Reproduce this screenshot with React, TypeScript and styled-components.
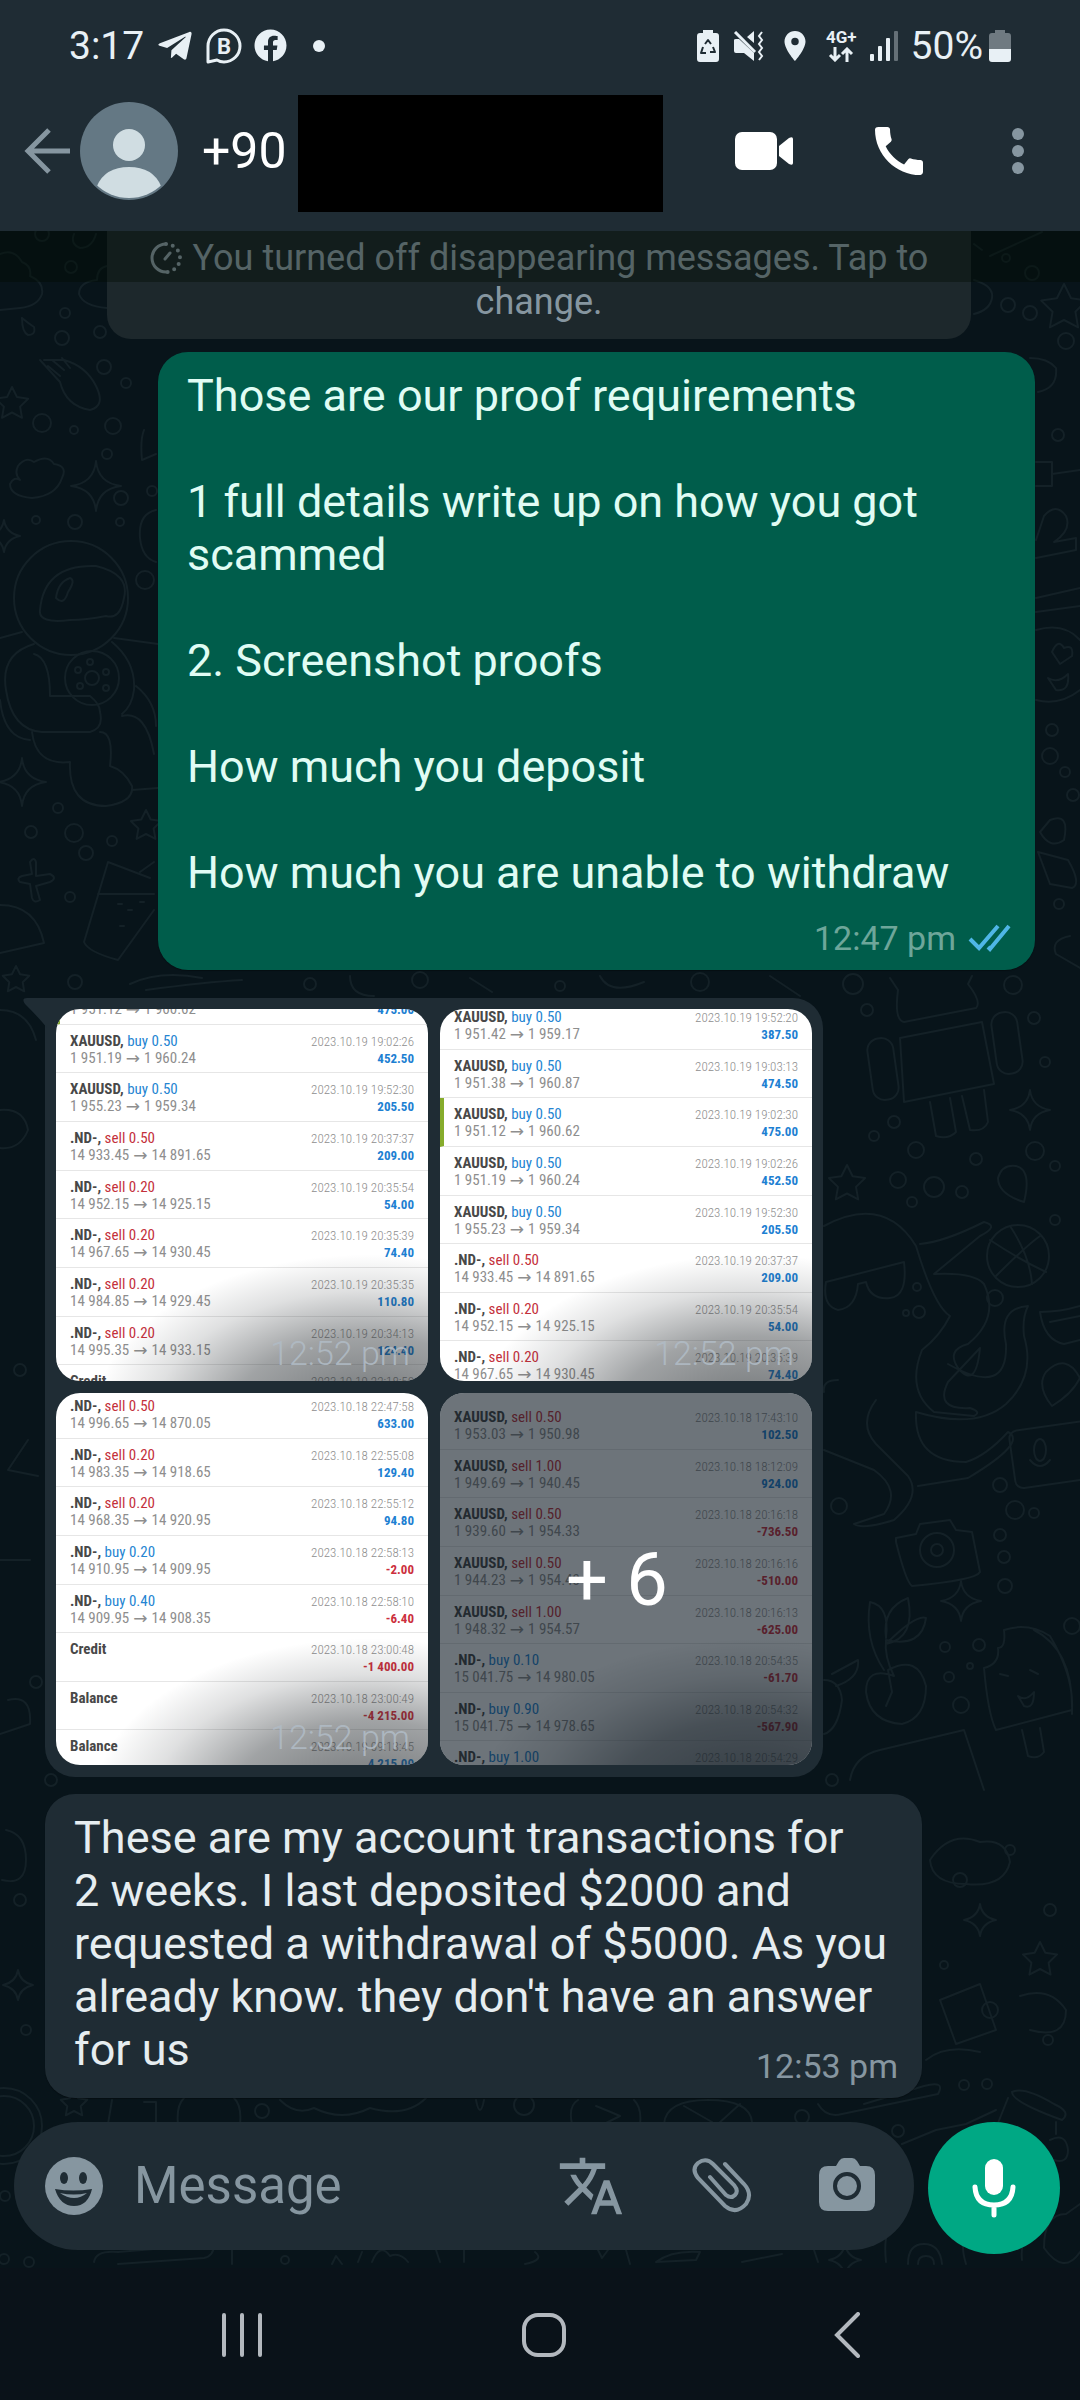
import React from 'react';
import styled, { createGlobalStyle } from 'styled-components';
import { FaFacebook, FaTelegramPlane } from 'react-icons/fa';
import { MdLocationOn, MdTranslate, MdCall } from 'react-icons/md';

const color = {
  bar: '#1f2c34',
  chat: '#08141a',
  nav: '#0a1219',
  outgoing: '#005d4b',
  text: '#e6edf0',
  muted: '#8696a0',
  status: '#e8f0f5',
  accent: '#00a884',
  doodle: '#142127',
};

const GlobalStyle = createGlobalStyle`
  *, *::before, *::after { box-sizing: border-box; }
  body { margin: 0; background: ${color.chat}; }
  body, button, input { font-family: Roboto, "Noto Sans", sans-serif; }
  button { border: 0; padding: 0; background: none; color: inherit; cursor: pointer; }
  svg { display: block; }
`;

const Page = styled.div`
  position: relative;
  isolation: isolate;
  display: flex;
  flex-direction: column;
  min-height: 100vh;
  background: ${color.chat};
`;

const Wallpaper = styled.svg`
  position: absolute;
  inset: 0;
  z-index: -1;
  width: 100%;
  height: 100%;
  fill: none;
  stroke: ${color.doodle};
  stroke-width: 2;
`;

/* ---------- status bar and header ---------- */

const StatusBar = styled.div`
  display: flex;
  align-items: center;
  justify-content: space-between;
  height: 91px;
  padding: 0 69px;
  background: ${color.bar};
  color: ${color.status};
`;

const StatusGroup = styled.div<{ $gap: number }>`
  display: flex;
  align-items: center;
  gap: ${(p) => p.$gap}px;
`;

const StatusText = styled.span`
  font-size: 39px;
  line-height: 46px;
`;

const Network = styled.span`
  display: flex;
  flex-direction: column;
  align-items: center;
  gap: 1px;
  font-size: 17px;
  font-weight: 700;
  line-height: 17px;
`;

const Header = styled.header`
  display: flex;
  align-items: center;
  height: 140px;
  padding: 0 56px 20px 24px;
  background: ${color.bar};
  color: #fff;
`;

const Avatar = styled.span`
  margin: 0 24px 0 10px;
`;

const Contact = styled.h1`
  margin: 0;
  font-size: 50px;
  line-height: 60px;
  font-weight: 400;
`;

const Redaction = styled.div`
  width: 365px;
  height: 117px;
  margin: 5px 0 0 11px;
  background: #000;
`;

const HeaderActions = styled.div`
  display: flex;
  align-items: center;
  flex: 1;
  justify-content: flex-end;
`;

const HeaderButton = styled.button<{ $gap?: number }>`
  margin-left: ${(p) => p.$gap ?? 0}px;
  color: #fff;
`;

/* ---------- conversation ---------- */

const Chat = styled.main`
  display: flex;
  flex-direction: column;
  padding: 0 45px 24px;
`;

const Notice = styled.button`
  position: relative;
  margin: 0 64px 13px 62px;
  padding: 5px 32px 15px;
  border-radius: 0 0 24px 24px;
  background: #1d282c;
  color: ${color.muted};
  font-size: 36px;
  line-height: 44px;
  text-align: center;
`;

const NoticeIcon = styled.svg`
  display: inline-block;
  width: 32px;
  height: 32px;
  margin-right: 11px;
  vertical-align: -4px;
`;

const HeaderShade = styled.div`
  position: absolute;
  z-index: 1;
  left: 0;
  right: 0;
  top: 231px;
  height: 51px;
  background: rgba(0, 10, 0, 0.36);
  pointer-events: none;
`;

const Bubble = styled.article<{ $out?: boolean }>`
  display: flow-root;
  margin: ${(p) => (p.$out ? '0 0 28px 113px' : '0 113px 0 0')};
  padding: 17px 24px 12px 29px;
  border-radius: 30px;
  background: ${(p) => (p.$out ? color.outgoing : color.bar)};
  color: ${(p) => (p.$out ? '#e0fcf4' : color.text)};
  box-shadow: 0 1px 1px rgba(0, 0, 0, 0.3);
`;

const BubbleText = styled.p<{ $tuck?: boolean }>`
  margin: 0 0 ${(p) => (p.$tuck ? -30 : 19)}px;
  font-size: 45px;
  line-height: 53px;
  white-space: pre-line;
`;

const Meta = styled.footer<{ $out?: boolean }>`
  display: flex;
  justify-content: flex-end;
  align-items: center;
  gap: 12px;
  font-size: 34px;
  line-height: 40px;
  color: ${(p) => (p.$out ? '#6ea69a' : color.muted)};
`;

const Album = styled.article`
  position: relative;
  align-self: flex-start;
  display: grid;
  grid-template-columns: repeat(2, 372px);
  gap: 12px;
  margin-bottom: 17px;
  padding: 11px 11px 12px;
  border-radius: 0 30px 30px 30px;
  background: ${color.bar};
`;

const Tail = styled.svg`
  position: absolute;
  left: -22px;
  top: 0;
`;

const Tile = styled.button`
  position: relative;
  display: block;
  height: 372px;
  overflow: hidden;
  border-radius: 24px;
  background: #fff;
  text-align: left;
`;

const Rows = styled.span<{ $shift: number; $count: number; $height: number }>`
  display: grid;
  grid-template-rows: repeat(${(p) => p.$count}, 1fr);
  height: ${(p) => p.$height}px;
  margin-top: ${(p) => p.$shift}px;
  font-family: "Roboto Condensed", "Liberation Sans Narrow", Roboto, sans-serif;
`;

const Row = styled.span<{ $marked?: boolean }>`
  display: flex;
  justify-content: space-between;
  padding: 8px 14px 0 ${(p) => (p.$marked ? 10 : 14)}px;
  border-left: ${(p) => (p.$marked ? '4px solid #86ac2c' : '0')};
  border-bottom: 1px solid #e6e6e6;
  line-height: 17px;
  white-space: nowrap;
`;

const RowSide = styled.span<{ $end?: boolean }>`
  display: flex;
  flex-direction: column;
  align-items: ${(p) => (p.$end ? 'flex-end' : 'flex-start')};
  font-size: ${(p) => (p.$end ? 13 : 15)}px;
  font-weight: ${(p) => (p.$end ? 300 : 400)};
  color: #8e8e8e;
`;

const Prices = styled.span`
  display: flex;
  gap: 4px;
  height: 17px;
`;

const Arrow = styled.span`
  font-family: "DejaVu Sans", sans-serif;
  font-size: 17px;
`;

const Symbol = styled.b`
  color: #484848;
  font-weight: 700;
`;

const Side = styled.span<{ $tone: Tone }>`
  color: ${(p) => (p.$tone === 'buy' ? '#2585d2' : '#c4303b')};
`;

const Amount = styled.b<{ $loss: boolean }>`
  font-weight: 700;
  color: ${(p) => (p.$loss ? '#cc2f3d' : '#1d7fd2')};
`;

const Shade = styled.span`
  position: absolute;
  inset: 0;
  background: radial-gradient(ellipse 74% 44% at 84% 110%, rgba(30, 36, 40, 0.56) 20%, rgba(30, 36, 40, 0.42) 50%, rgba(30, 36, 40, 0.14) 78%, transparent);
`;

const TileTime = styled.span`
  position: absolute;
  right: 18px;
  bottom: 8px;
  font-size: 34px;
  line-height: 40px;
  font-weight: 300;
  color: rgba(176, 187, 197, 0.9);
`;

const More = styled.span`
  position: absolute;
  inset: 0;
  display: flex;
  align-items: center;
  justify-content: center;
  padding-right: 18px;
  background: rgba(12, 24, 34, 0.6);
  color: #fff;
  font-size: 74px;
`;

/* ---------- composer and navigation ---------- */

const Composer = styled.form`
  display: flex;
  align-items: flex-start;
  gap: 14px;
  margin: 0 20px 14px 14px;
`;

const Field = styled.div`
  display: flex;
  align-items: center;
  flex: 1;
  min-width: 0;
  height: 128px;
  padding: 0 39px 0 31px;
  border-radius: 64px;
  background: ${color.bar};
  color: ${color.muted};
`;

const Input = styled.input`
  flex: 1;
  min-width: 0;
  margin: 0 20px 0 31px;
  padding: 0;
  border: 0;
  outline: 0;
  background: none;
  color: ${color.text};
  font-size: 51px;
  line-height: 60px;
  &::placeholder { color: ${color.muted}; opacity: 1; }
`;

const FieldTools = styled.div`
  display: flex;
  align-items: center;
  gap: 67px;
`;

const MicButton = styled.button`
  display: grid;
  place-items: center;
  width: 132px;
  height: 132px;
  border-radius: 50%;
  background: ${color.accent};
`;

const NavBar = styled.nav`
  display: grid;
  grid-template-columns: repeat(3, 1fr);
  place-items: center;
  height: 132px;
  margin-top: auto;
  padding: 2px 82px 0 91px;
  background: ${color.nav};
  color: #b3b8be;
`;

/* ---------- data ---------- */

type Tone = 'buy' | 'sell';
type Deal = { name: string; tone?: Tone; size?: string; prices?: string; date: string; amount: string; marked?: boolean };

const deal = (name: string, tone: Tone, size: string, prices: string, date: string, amount: string, marked = false): Deal => ({
  name: name + ',', tone, size, prices, date, amount, marked,
});

const X = 'XAUUSD';
const N = '.ND-';

const albums: { shift: number; height: number; deals: Deal[]; more?: string }[] = [
  {
    shift: -33,
    height: 438,
    deals: [
      deal(X, 'buy', '0.50', '1 951.12 → 1 960.62', '2023.10.19 19:02:30', '475.00', true),
      deal(X, 'buy', '0.50', '1 951.19 → 1 960.24', '2023.10.19 19:02:26', '452.50'),
      deal(X, 'buy', '0.50', '1 955.23 → 1 959.34', '2023.10.19 19:52:30', '205.50'),
      deal(N, 'sell', '0.50', '14 933.45 → 14 891.65', '2023.10.19 20:37:37', '209.00'),
      deal(N, 'sell', '0.20', '14 952.15 → 14 925.15', '2023.10.19 20:35:54', '54.00'),
      deal(N, 'sell', '0.20', '14 967.65 → 14 930.45', '2023.10.19 20:35:39', '74.40'),
      deal(N, 'sell', '0.20', '14 984.85 → 14 929.45', '2023.10.19 20:35:35', '110.80'),
      deal(N, 'sell', '0.20', '14 995.35 → 14 933.15', '2023.10.19 20:34:13', '124.40'),
      { name: 'Credit', date: '2023.10.19 22:18:50', amount: '' },
    ],
  },
  {
    shift: -8,
    height: 389,
    deals: [
      deal(X, 'buy', '0.50', '1 951.42 → 1 959.17', '2023.10.19 19:52:20', '387.50'),
      deal(X, 'buy', '0.50', '1 951.38 → 1 960.87', '2023.10.19 19:03:13', '474.50'),
      deal(X, 'buy', '0.50', '1 951.12 → 1 960.62', '2023.10.19 19:02:30', '475.00', true),
      deal(X, 'buy', '0.50', '1 951.19 → 1 960.24', '2023.10.19 19:02:26', '452.50'),
      deal(X, 'buy', '0.50', '1 955.23 → 1 959.34', '2023.10.19 19:52:30', '205.50'),
      deal(N, 'sell', '0.50', '14 933.45 → 14 891.65', '2023.10.19 20:37:37', '209.00'),
      deal(N, 'sell', '0.20', '14 952.15 → 14 925.15', '2023.10.19 20:35:54', '54.00'),
      deal(N, 'sell', '0.20', '14 967.65 → 14 930.45', '2023.10.19 20:35:39', '74.40'),
    ],
  },
  {
    shift: -3,
    height: 389,
    deals: [
      deal(N, 'sell', '0.50', '14 996.65 → 14 870.05', '2023.10.18 22:47:58', '633.00'),
      deal(N, 'sell', '0.20', '14 983.35 → 14 918.65', '2023.10.18 22:55:08', '129.40'),
      deal(N, 'sell', '0.20', '14 968.35 → 14 920.95', '2023.10.18 22:55:12', '94.80'),
      deal(N, 'buy', '0.20', '14 910.95 → 14 909.95', '2023.10.18 22:58:13', '-2.00'),
      deal(N, 'buy', '0.40', '14 909.95 → 14 908.35', '2023.10.18 22:58:10', '-6.40'),
      { name: 'Credit', date: '2023.10.18 23:00:48', amount: '-1 400.00' },
      { name: 'Balance', date: '2023.10.18 23:00:49', amount: '-4 215.00' },
      { name: 'Balance', date: '2023.10.19 09:13:45', amount: '4 215.00' },
    ],
  },
  {
    shift: 8,
    height: 389,
    more: '+ 6',
    deals: [
      deal(X, 'sell', '0.50', '1 953.03 → 1 950.98', '2023.10.18 17:43:10', '102.50'),
      deal(X, 'sell', '1.00', '1 949.69 → 1 940.45', '2023.10.18 18:12:09', '924.00'),
      deal(X, 'sell', '0.50', '1 939.60 → 1 954.33', '2023.10.18 20:16:18', '-736.50'),
      deal(X, 'sell', '0.50', '1 944.23 → 1 954.43', '2023.10.18 20:16:16', '-510.00'),
      deal(X, 'sell', '1.00', '1 948.32 → 1 954.57', '2023.10.18 20:16:13', '-625.00'),
      deal(N, 'buy', '0.10', '15 041.75 → 14 980.05', '2023.10.18 20:54:35', '-61.70'),
      deal(N, 'buy', '0.90', '15 041.75 → 14 978.65', '2023.10.18 20:54:32', '-567.90'),
      deal(N, 'buy', '1.00', '', '2023.10.18 20:54:29', ''),
    ],
  },
];

const REQUIREMENTS = `Those are our proof requirements

1 full details write up on how you got scammed

2. Screenshot proofs

How much you deposit

How much you are unable to withdraw`;

const REPLY = `These are my account transactions for
2 weeks. I last deposited $2000 and requested a withdrawal of $5000. As you already know. they don't have an answer for us`;

/* ---------- wallpaper drawing ---------- */

const bubbles: [number, number, number][] = [
  [104, 367, 7], [126, 383, 5], [42, 423, 9], [113, 426, 8], [74, 430, 4], [107, 454, 5], [121, 498, 7], [152, 491, 5],
  [36, 520, 4], [75, 522, 7], [120, 522, 4], [145, 580, 9], [58, 808, 5], [31, 832, 6], [74, 833, 9], [112, 841, 5],
  [86, 853, 7], [70, 897, 5], [65, 313, 5], [62, 338, 7], [100, 332, 6], [71, 267, 6], [42, 234, 7], [20, 1370, 6],
  [1006, 258, 4], [1032, 273, 7], [1008, 305, 7], [1030, 313, 7], [1066, 341, 8], [1058, 435, 6], [1052, 730, 6],
  [1050, 756, 8], [1065, 772, 5], [1073, 795, 6], [1059, 904, 5], [853, 984, 10], [867, 1010, 6], [1013, 985, 9],
  [1034, 1018, 6], [1045, 1062, 5], [894, 1122, 6], [874, 1136, 5], [916, 1150, 8], [1035, 1151, 9], [976, 1159, 6],
  [1055, 1166, 5], [898, 1180, 8], [934, 1187, 10], [962, 1192, 6], [912, 1202, 5], [1055, 1220, 5], [995, 1298, 8],
  [919, 1312, 6], [917, 1287, 4], [906, 1313, 3], [839, 1506, 8], [1000, 1485, 7], [1015, 1510, 9], [1034, 1513, 5],
  [1000, 1535, 6], [1004, 1557, 6], [1005, 1586, 7], [1072, 1626, 8], [945, 1647, 5], [979, 1645, 6], [970, 1666, 3],
  [949, 1677, 5], [961, 1705, 8], [832, 1780, 6], [262, 2111, 7], [524, 2105, 10], [802, 2117, 7], [898, 2131, 6],
  [964, 2085, 5], [987, 2084, 5], [5, 2196, 5], [4, 2259, 5], [29, 2262, 5], [285, 2260, 4], [51, 1780, 6], [75, 982, 7],
  [310, 984, 6], [420, 980, 8], [560, 986, 5], [700, 982, 9], [36, 1682, 6], [20, 1900, 6], [26, 2030, 5],
  [960, 1880, 7], [1010, 1850, 5], [1050, 1910, 6], [990, 2010, 8], [1048, 2040, 5], [944, 1965, 4],
];

const stars: [number, number, number][] = [
  [12, 404, 17], [1064, 308, 24], [847, 1184, 19], [74, 2104, 14], [146, 826, 16], [16, 980, 14], [1040, 1960, 18],
];

const sparkles: [number, number, number][] = [
  [96, 486, 25], [22, 782, 24], [4, 536, 16], [1030, 1110, 20], [961, 1601, 20], [845, 2260, 16], [980, 1920, 16], [18, 1985, 15],
];

const starPath = (x: number, y: number, r: number) =>
  'M' +
  Array.from({ length: 10 }, (_, i) => {
    const a = (i * Math.PI) / 5 - Math.PI / 2;
    const q = i % 2 ? r / 2 : r;
    return `${(x + q * Math.cos(a)).toFixed(1)} ${(y + q * Math.sin(a)).toFixed(1)}`;
  }).join('L') +
  'Z';

const sparklePath = (x: number, y: number, r: number) =>
  `M${x} ${y - r}Q${x + 2} ${y - 3} ${x + r} ${y}Q${x + 2} ${y + 3} ${x} ${y + r}Q${x - 2} ${y + 3} ${x - r} ${y}Q${x - 2} ${y - 3} ${x} ${y - r}Z`;

function Doodles() {
  return (
    <Wallpaper aria-hidden="true" strokeLinecap="round" strokeLinejoin="round">
      {bubbles.map(([x, y, r]) => <circle key={`${x}-${y}`} cx={x} cy={y} r={r} />)}
      {stars.map(([x, y, r]) => <path key={`${x}-${y}`} d={starPath(x, y, r)} />)}
      {sparkles.map(([x, y, r]) => <path key={`${x}-${y}`} d={sparklePath(x, y, r)} />)}
      {/* clouds, apple and rain under the header */}
      <path d="M0 254q14-6 22 8q10 4 8 14q14 6 12 18q-4 12-22 14l-20 2M107 266q-10 2-10 14q-18 2-18 14q4 12 28 14M74 234q-4 10 6 14q12 0 16-14M22 318q0 14 6 17q8 0 6-8q-6-4-12-9M974 280q20 6 18 18q-2 12-18 16M990 256l52-24M974 244l8 6" />
      {/* fork and mitten, cloud */}
      <path d="M40 360l20 22q6 24 30 28q16-4 6-24q-10-20-32-26l-20 0m4 6l12 10m-8-16l12 10m-2-12l8 10M18 466q8-10 16-4q14-8 20 2q14 2 8 14q-6 18-30 20q-22-2-22-14q4-8 10-4q-6-6-2-14M144 430q-4 10-2 30l14-6M156 510q-18 4-16 28q2 20 16 24" />
      {/* astronaut */}
      <ellipse cx="71" cy="598" rx="57" ry="57" />
      <path d="M40 610q4-46 56-44q34 8 28 32q-4 22-18 18q-20 4-36 4q-32 4-30-10M56 598q2-16 14-20q6 2-2 14q-4 14-12 6M22 632l-22 6M34 644q-34 10-28 46q6 40 36 42h48q14-4 10-20q0-8-10-16h-40q0-38-16-42M112 642q24 20 22 48q-2 16-12 24M32 732q4 34 38 30q-2 44 36 44q28-4 26-20q-8-16-22-20q4-34-10-34M114 638l44 6M132 790l26-2M122 716q24-6 32 38M136 686q20 16 20 40M0 700q4 38 30 40" />
      <circle cx="92" cy="678" r="27" /><circle cx="92" cy="678" r="7" /><circle cx="78" cy="670" r="3" /><circle cx="106" cy="672" r="3" /><circle cx="90" cy="662" r="3" /><circle cx="80" cy="686" r="3" /><circle cx="106" cy="688" r="3" />
      {/* plus, cup, whale */}
      <path d="M30 862q4-6 6 0v14l14-2q8 4 0 8l-14 4l4 14q-6 4-8-2l-2-14l-10-2q-4-4 2-6l10-2zM108 862l-24 80q4 10 34 18l36-50M98 894h56M108 862l42 16M140 872l14-10M0 905q36 0 44 38l-44 10" />
      <path d="M118 904h4M128 910h4M140 902h4M120 926h4" />
      {/* doodles along the right edge */}
      <path d="M1030 358q18 0 26 10q2 20-18 24M1036 462h16v24h-16M1052 474l28-4M1036 540l8-24q12-14 22 0q6 14-12 26l22-4v12l-40 8M1036 598l44-10M1036 612l44-6M1036 630q28-8 44 10M1036 700q24 6 44-10M1052 652q6-14 12-4q10-4 8 8l-12 8zM1048 678q10 6 20-4q2 18-12 16zM1038 852l30 8q14 24 4 28l-22-4zM1050 820q20-8 14 20q-14 10-24-8zM1070 936q-20 4-14 18l24 14" />
      {/* robot */}
      <path d="M890 978l8 12q-4 30 6 32l72-14q6-6-8-24l4-8M900 1038l82-16l12 62l-90 18zM930 1102l6 34q12 4 20-4l-6-34M962 1096l8 34q14 2 18-8l-4-32" />
      <rect x="870" y="1038" width="26" height="62" rx="12" transform="rotate(-8 883 1069)" />
      <rect x="994" y="1012" width="26" height="62" rx="12" transform="rotate(-8 1007 1043)" />
      {/* octopus with glasses */}
      <path d="M824 1226q60-32 92 20q18 60 34 70q-10 20-28 34q-16 40 12 62l40 4q8-4-4-8q-36 2-22-26l32-34q-4 42-22 20q-12-18 10-24q32-26 16-60q-10-12-50-10l46-38q20-10 4-14q-40 20-64 22M948 1364q60 34 58-20q-8-36 22-38q-6 12-4 30q12 40-18 68q-30 26-90 8q-2 50 50 50q20-6 42-30q20 10-40 46l-50 8M824 1392q-2-12 14-12M824 1450l50 20q28 20 10 44l-30 10q8 6 40-4q28-24 14-44l-32-32q-18-20 0-44" />
      <path d="M826 1282l78-20q4 34-14 36q-20 2-24-16l-8 2q-2 24-20 26q-16-4-12-28z" />
      {/* ball, location pins, boat */}
      <circle cx="1018" cy="1256" r="31" />
      <path d="M990 1240q30 20 56 32M996 1276q30-30 44-40M1010 1226q20 30 22 58" />
      <path d="M1024 1202q-26-8-26-24q4-14 18-12q16 4 8 36zM1052 1406q-16-20-6-34q20-20 34 6q-8 16-28 28zM1040 1312q20 0 40-6M1040 1312q4 28 24 32l16-4M1050 1322l30-6" />
      <rect x="1012" y="1426" width="90" height="58" rx="8" transform="rotate(-8 1050 1455)" />
      <ellipse cx="1040" cy="1450" rx="6" ry="11" /><path d="M1030 1460q10 12 20 0" />
      {/* camera */}
      <path d="M896 1538l20-4l4-10l30-4l6 10l16 2l8 40q-4 8-68 14q-6-4-16-44z" />
      <circle cx="937" cy="1550" r="17" /><circle cx="937" cy="1550" r="6" />
      {/* sprout and peach */}
      <path d="M884 1670q-20-30-14-68q20 4 16 36q-4-30 22-40q8 40-22 46q30-30 40-26q-4 30-40 22q-2 16 8 36q-28-10-28 16q4 30 36 32q24-6 24-38q-8-32-38-16l4 22l-6 14" />
      {/* ice cream */}
      <path d="M984 1668q16-4 14-20q8 0 6-18q24-8 46 6q24 40 22 74l-76 20q-8-16-12-62zM1034 1630q40 20 38 84M1022 1730l6 26q10 4 16-4l-4-24M1000 1674l8 2M1030 1670l8 4M1018 1696q8 6 16-4q0 18-10 14z" />
      <path d="M824 1680q16 0 18 20q-4 30-18 34M832 1674l26-14q2 18-22 26M850 1780q4-24 30-30l84-20l20 60" />
      {/* faint shapes beside the received messages */}
      <path d="M0 1010q28 0 36 30M0 1110q24-2 28 20q-8 20-28 18M28 1440l-20 30l30 6M0 1560h30M8 1700q24-6 22 24l-30 10M6 1830q20 4 20 30t-24 20M930 1860q20-30 50-18q26-4 30 20q-6 26-44 22q-34 0-36-24zM940 2000l40-16l16 46l-40 14zM1020 1996q30-10 46 14q0 30-36 20M926 2060q20-16 54-8" />
      <path d="M130 984q30-14 72-6M146 990q60-8 96-10M350 976q0 20 24 20M470 978l22 14M600 976q10 20 44 6M770 976l30 20" />
      {/* clock, cloud and bottle behind the composer */}
      <circle cx="4" cy="2126" r="38" /><circle cx="4" cy="2126" r="30" />
      <path d="M112 2100l-4 24M144 2102h12v22M178 2124q-2-18 6-26M240 2124q2-18-6-26M280 2100q16 16 34 8q28 14 56 0q36 10 56-10M476 2100q4 20 8 0M572 2124q-4-18 6-24M640 2124q2-16-6-24M596 2106q10 4 24 10l-16 8M664 2124q2-24 44-24t44 22M684 2106l28 16M740 2104l-22 20" />
      <path d="M818 2104q8 14 24 10l96-20q8-14-14-8l-60 18M902 2144l34-14l30-6l30-14M1012 2092q0 10 50 28q10-8-8-16q-30-18-42-12M1008 2098l-12 30M1056 2122v12M1050 2140q16-8 18 10q0 14-14 10M1080 2204l-14 10q-22 0-22 34q20 28 36 4M1022 2260q-2-20 8-28" />
      <path d="M94 2262q2-12 24-10l96-8q0 12-10 14l-86 6M232 2250v14M332 2264l4-8l6 8M358 2262l4-10M372 2262q8-20 18-6q10-4 18 6M436 2250l4 12M464 2250v12M525 2264q20-4 10-12M598 2250l4 8l6-8M626 2250l4 14M656 2262q16-12 44-10l-4 8zM742 2262l40-8M814 2250l4 12M886 2262q-4-40 14-40M908 2264q0-20 16-20t18 20M918 2264q0-8 8-8t8 8M966 2264q-6-20 0-26" />
    </Wallpaper>
  );
}

/* ---------- icons ---------- */

const BusinessIcon = () => (
  <svg width="36" height="36" viewBox="0 0 36 36" fill="none" stroke="currentColor" strokeWidth="3" aria-hidden="true">
    <path d="M2 34V18A16 16 0 1 1 18 34q-4 0-7-2z" strokeLinejoin="round" />
    <text x="18" y="26" textAnchor="middle" fontSize="22" fontWeight="700" fill="currentColor" stroke="none">B</text>
  </svg>
);

const RecycleBattery = () => (
  <svg width="22" height="32" viewBox="0 0 22 32" aria-hidden="true">
    <path fill="currentColor" d="M6 0h10v3h3a3 3 0 0 1 3 3v23a3 3 0 0 1-3 3H3a3 3 0 0 1-3-3V6a3 3 0 0 1 3-3h3z" />
    <path d="M8 14l3-4l3 4M16 17l2 5h-5M9 23H4l2-6" fill="none" stroke={color.bar} strokeWidth="2" strokeLinejoin="round" />
  </svg>
);

const MuteIcon = () => (
  <svg width="32" height="30" viewBox="-2 0 32 30" fill="currentColor" aria-hidden="true">
    <path d="M0 9q0-1 2-1h3l15 14v8l-10-8H2q-2 0-2-2zM13 6l7-6v12z" />
    <path d="M1 1l20 20" stroke="currentColor" strokeWidth="3" />
    <path d="M28 1l-3 4l3 4l-3 4l3 4l-3 4l3 4l-3 4" fill="none" stroke="currentColor" strokeWidth="2" />
  </svg>
);

const DataArrows = () => (
  <svg width="26" height="15" viewBox="0 0 26 15" fill="none" stroke="currentColor" strokeWidth="3" aria-hidden="true">
    <path d="M7 0v13M2 8l5 5l5-5M19 15V2M14 7l5-5l5 5" />
  </svg>
);

const SignalIcon = () => (
  <svg width="28" height="30" viewBox="0 0 28 30" fill="currentColor" aria-hidden="true">
    <rect y="23" width="4" height="7" rx="1" />
    <rect x="8" y="15" width="4" height="15" rx="1" />
    <rect x="16" y="7" width="4" height="23" rx="1" />
    <rect x="24" width="4" height="30" rx="1" opacity=".35" />
  </svg>
);

const BatteryIcon = () => (
  <svg width="22" height="32" viewBox="0 0 22 32" fill="currentColor" aria-hidden="true">
    <path opacity=".4" d="M6 0h10v3h3a3 3 0 0 1 3 3v13H0V6a3 3 0 0 1 3-3h3z" />
    <path d="M0 19h22v10a3 3 0 0 1-3 3H3a3 3 0 0 1-3-3z" />
  </svg>
);

const BackArrow = () => (
  <svg width="46" height="46" viewBox="0 0 46 46" fill="none" stroke={color.muted} strokeWidth="5" aria-hidden="true">
    <path d="M46 23H5M25 2L4 23l21 21" />
  </svg>
);

const AvatarIcon = () => (
  <svg width="98" height="98" viewBox="0 0 98 98" role="img" aria-label="Profile photo">
    <clipPath id="face"><circle cx="49" cy="49" r="47" /></clipPath>
    <circle cx="49" cy="49" r="49" fill="#647884" />
    <g fill="#d0dde2" clipPath="url(#face)">
      <circle cx="49" cy="43" r="16" />
      <path d="M17 84q8-19 32-19t32 19v14H17z" />
    </g>
  </svg>
);

const VideoIcon = () => (
  <svg width="58" height="38" viewBox="0 0 58 38" fill="currentColor" aria-hidden="true">
    <rect width="42" height="38" rx="7" />
    <path d="M44 14l10-8q4-2 4 1v24q0 3-4 1l-10-8z" />
  </svg>
);

const DotsIcon = () => (
  <svg width="12" height="46" viewBox="0 0 12 46" fill={color.muted} aria-hidden="true">
    <circle cx="6" cy="6" r="6" /><circle cx="6" cy="23" r="6" /><circle cx="6" cy="40" r="6" />
  </svg>
);

const Ticks = () => (
  <svg width="43" height="28" viewBox="0 0 43 28" fill="none" stroke="#4fb6e6" strokeWidth="4" role="img" aria-label="Read">
    <path d="M2 15l9 9L30 2M20 23l2 2L41 2" />
  </svg>
);

const EmojiIcon = () => (
  <svg width="58" height="58" viewBox="0 0 58 58" aria-hidden="true">
    <circle cx="29" cy="29" r="29" fill="currentColor" />
    <g fill={color.bar}>
      <ellipse cx="19" cy="21" rx="4" ry="6" /><ellipse cx="38" cy="21" rx="4" ry="6" />
      <path d="M10 32q18 3 37 0q-4 17-18 17T10 32z" />
    </g>
    <path d="M15 36q14 3 27 0q-6 5-13 5t-14-5z" fill="currentColor" />
  </svg>
);

const ClipIcon = () => (
  <svg width="60" height="56" viewBox="0 0 60 56" fill="none" stroke="currentColor" strokeWidth="4" strokeLinecap="round" aria-hidden="true">
    <path d="M33 6l19 20q9 10 2 20q-10 11-21 2L6 20Q-1 11 6 5q8-6 15 1l21 21q5 6 1 10t-9 0L18 19" />
  </svg>
);

const CameraIcon = () => (
  <svg width="56" height="56" viewBox="0 0 56 56" aria-hidden="true">
    <path fill="currentColor" d="M9 8h8l3-5q2-3 5-3h8q3 0 5 3l3 5h6q9 0 9 9v27q0 9-9 9H9q-9 0-9-9V17q0-9 9-9z" />
    <circle cx="28" cy="28" r="12" fill="none" stroke={color.bar} strokeWidth="4" />
  </svg>
);

const MicIcon = () => (
  <svg width="44" height="60" viewBox="0 0 44 60" fill="none" stroke="#fff" strokeLinecap="round" aria-hidden="true">
    <rect x="13" y="1" width="18" height="36" rx="9" fill="#fff" stroke="none" />
    <path d="M3 29q1 18 19 18t19-18M22 48v9" strokeWidth="5" />
  </svg>
);

const TimerIcon = () => (
  <NoticeIcon viewBox="0 0 32 32" fill="none" stroke="currentColor" strokeWidth="3" strokeLinecap="round" aria-hidden="true">
    <path d="M16 2a14 14 0 0 0 0 28M15 17l5-6" />
    <path d="M16 2a14 14 0 0 1 0 28" strokeDasharray="0 7" strokeWidth="4" />
  </NoticeIcon>
);

function DealRow({ item }: { item: Deal }) {
  const [open, close] = item.prices ? item.prices.split(' → ') : [];
  return (
    <Row $marked={item.marked}>
      <RowSide>
        <span>
          <Symbol>{item.name}</Symbol>
          {item.tone && <Side $tone={item.tone}> {item.tone} {item.size}</Side>}
        </span>
        {open && <Prices><span>{open}</span><Arrow>→</Arrow><span>{close}</span></Prices>}
      </RowSide>
      <RowSide $end>
        <span>{item.date}</span>
        <Amount $loss={item.amount.startsWith('-')}>{item.amount}</Amount>
      </RowSide>
    </Row>
  );
}

export default function App() {
  return (
    <Page>
      <GlobalStyle />
      <Doodles />
      <StatusBar>
        <StatusGroup $gap={12}>
          <StatusText>3:17</StatusText>
          <FaTelegramPlane size={38} />
          <BusinessIcon />
          <FaFacebook size={33} />
          <svg width="36" height="12" viewBox="0 0 36 12" aria-hidden="true"><circle cx="20" cy="6" r="6" fill="currentColor" /></svg>
        </StatusGroup>
        <StatusGroup $gap={6}>
          <StatusGroup $gap={13}>
            <RecycleBattery />
            <MuteIcon />
            <MdLocationOn size={36} />
            <Network>4G+<DataArrows /></Network>
            <SignalIcon />
            <StatusText>50%</StatusText>
          </StatusGroup>
          <BatteryIcon />
        </StatusGroup>
      </StatusBar>
      <Header>
        <HeaderButton type="button" aria-label="Back"><BackArrow /></HeaderButton>
        <Avatar><AvatarIcon /></Avatar>
        <Contact>+90</Contact>
        <Redaction />
        <HeaderActions>
          <HeaderButton type="button" aria-label="Video call"><VideoIcon /></HeaderButton>
          <HeaderButton type="button" aria-label="Voice call" $gap={74}><MdCall size={64} /></HeaderButton>
          <HeaderButton type="button" aria-label="More options" $gap={81}><DotsIcon /></HeaderButton>
        </HeaderActions>
      </Header>
      <HeaderShade />

      <Chat>
        <Notice type="button"><TimerIcon />You turned off disappearing messages. Tap to change.</Notice>
        <Bubble $out>
          <BubbleText>{REQUIREMENTS}</BubbleText>
          <Meta $out><time>12:47 pm</time><Ticks /></Meta>
        </Bubble>
        <Album>
          <Tail width="24" height="30" viewBox="0 0 24 30" aria-hidden="true"><path d="M4 0h20v30Q18 22 2 6Q-2 0 4 0z" fill={color.bar} /></Tail>
          {albums.map((album, i) => (
            <Tile key={i} type="button">
              <Rows $shift={album.shift} $count={album.deals.length} $height={album.height}>
                {album.deals.map((item, n) => <DealRow key={n} item={item} />)}
              </Rows>
              <Shade />
              {album.more ? <More>{album.more}</More> : <TileTime>12:52 pm</TileTime>}
            </Tile>
          ))}
        </Album>
        <Bubble>
          <BubbleText $tuck>{REPLY}</BubbleText>
          <Meta><time>12:53 pm</time></Meta>
        </Bubble>
      </Chat>

      <Composer>
        <Field>
          <button type="button" aria-label="Emoji"><EmojiIcon /></button>
          <Input type="text" placeholder="Message" aria-label="Message" />
          <FieldTools>
            <button type="button" aria-label="Translate"><MdTranslate size={68} /></button>
            <button type="button" aria-label="Attach"><ClipIcon /></button>
            <button type="button" aria-label="Camera"><CameraIcon /></button>
          </FieldTools>
        </Field>
        <MicButton type="button" aria-label="Record voice message"><MicIcon /></MicButton>
      </Composer>

      <NavBar aria-label="System navigation">
        <button type="button" aria-label="Recent apps">
          <svg width="40" height="44" viewBox="0 0 40 44" stroke="currentColor" strokeWidth="4" strokeLinecap="round"><path d="M2 2v40M20 2v40M38 2v40" /></svg>
        </button>
        <button type="button" aria-label="Home">
          <svg width="44" height="44" viewBox="0 0 44 44" fill="none" stroke="currentColor" strokeWidth="4"><rect x="2" y="2" width="40" height="40" rx="14" /></svg>
        </button>
        <button type="button" aria-label="Back">
          <svg width="26" height="46" viewBox="0 0 26 46" fill="none" stroke="currentColor" strokeWidth="4" strokeLinecap="round"><path d="M24 2L3 23l21 21" /></svg>
        </button>
      </NavBar>
    </Page>
  );
}
